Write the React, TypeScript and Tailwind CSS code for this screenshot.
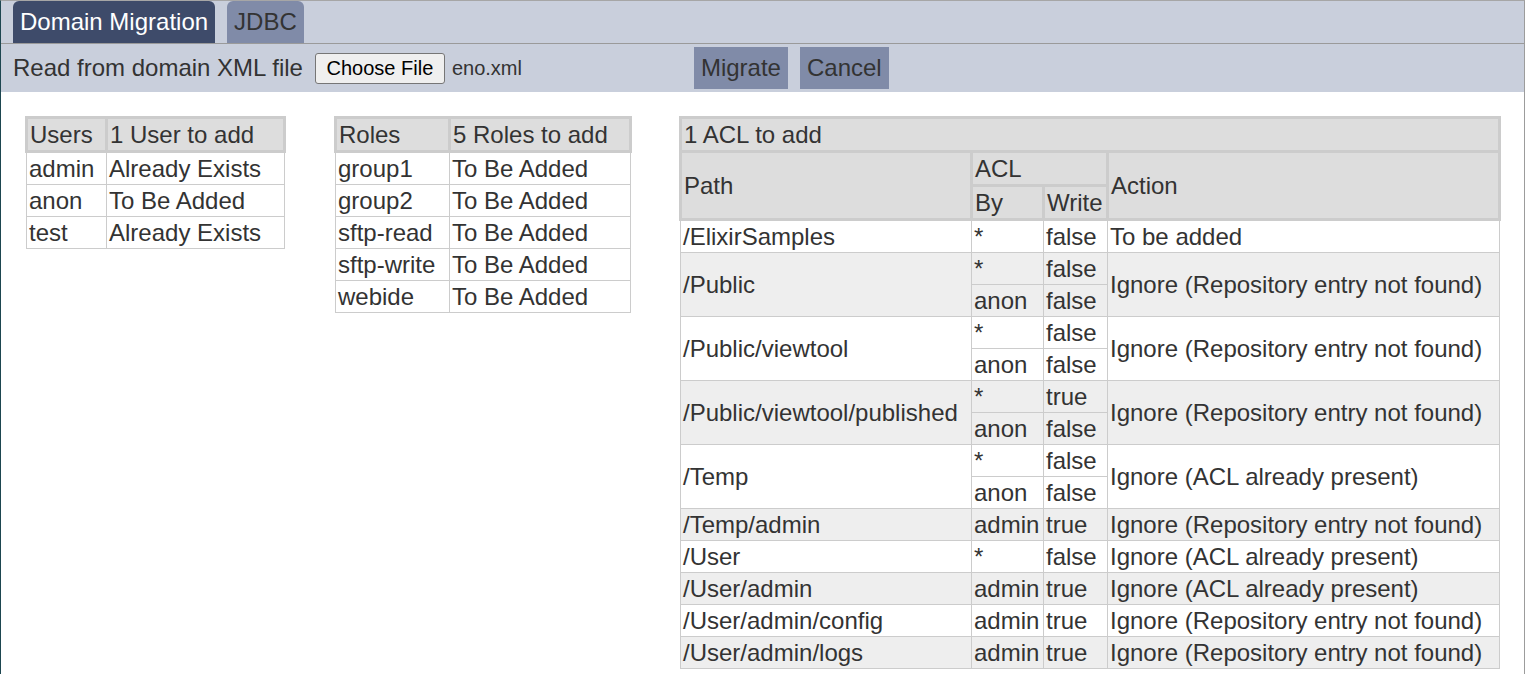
const th = 'border-[3px] border-[#cccccc] bg-[#dddddd] px-[2px] py-[1px] text-left font-normal leading-[29px] align-middle';
const td = 'border border-[#cccccc] px-[2px] py-[2px] leading-[27px] align-middle whitespace-nowrap';

const users = [
  ['admin', 'Already Exists'],
  ['anon', 'To Be Added'],
  ['test', 'Already Exists'],
];

const roles = [
  ['group1', 'To Be Added'],
  ['group2', 'To Be Added'],
  ['sftp-read', 'To Be Added'],
  ['sftp-write', 'To Be Added'],
  ['webide', 'To Be Added'],
];

interface AclEntry {
  path: string;
  perms: [string, string][];
  action: string;
}

const NF = 'Ignore (Repository entry not found)';
const AP = 'Ignore (ACL already present)';

const acls: AclEntry[] = [
  { path: '/ElixirSamples', perms: [['*', 'false']], action: 'To be added' },
  { path: '/Public', perms: [['*', 'false'], ['anon', 'false']], action: NF },
  { path: '/Public/viewtool', perms: [['*', 'false'], ['anon', 'false']], action: NF },
  { path: '/Public/viewtool/published', perms: [['*', 'true'], ['anon', 'false']], action: NF },
  { path: '/Temp', perms: [['*', 'false'], ['anon', 'false']], action: AP },
  { path: '/Temp/admin', perms: [['admin', 'true']], action: NF },
  { path: '/User', perms: [['*', 'false']], action: AP },
  { path: '/User/admin', perms: [['admin', 'true']], action: AP },
  { path: '/User/admin/config', perms: [['admin', 'true']], action: NF },
  { path: '/User/admin/logs', perms: [['admin', 'true']], action: NF },
];

function SimpleTable({ title, summary, rows, width, first }: { title: string; summary: string; rows: string[][]; width: string; first: string }) {
  return (
    <table className={`border-collapse table-fixed ${width}`}>
      <colgroup>
        <col className={first} />
        <col />
      </colgroup>
      <thead>
        <tr>
          <th className={th}>{title}</th>
          <th className={th}>{summary}</th>
        </tr>
      </thead>
      <tbody>
        {rows.map(([name, state]) => (
          <tr key={name} className="bg-white">
            <td className={td}>{name}</td>
            <td className={td}>{state}</td>
          </tr>
        ))}
      </tbody>
    </table>
  );
}

function AclTable() {
  return (
    <table className="border-collapse table-fixed w-[822px] ml-[47px]">
      <colgroup>
        <col className="w-[291px]" />
        <col className="w-[72px]" />
        <col className="w-[64px]" />
        <col />
      </colgroup>
      <thead>
        <tr>
          <th className={th} colSpan={4}>1 ACL to add</th>
        </tr>
        <tr>
          <th className={th} rowSpan={2}>Path</th>
          <th className={th} colSpan={2}>ACL</th>
          <th className={th} rowSpan={2}>Action</th>
        </tr>
        <tr>
          <th className={th}>By</th>
          <th className={th}>Write</th>
        </tr>
      </thead>
      {acls.map((a, i) => (
        <tbody key={a.path} className={i % 2 === 0 ? 'bg-white' : 'bg-[#eeeeee]'}>
          {a.perms.map(([by, write], j) => (
            <tr key={j}>
              {j === 0 && (
                <td className={td} rowSpan={a.perms.length}>{a.path}</td>
              )}
              <td className={td}>{by}</td>
              <td className={td}>{write}</td>
              {j === 0 && (
                <td className={td} rowSpan={a.perms.length}>{a.action}</td>
              )}
            </tr>
          ))}
        </tbody>
      ))}
    </table>
  );
}

export default function App() {
  return (
    <div className="min-h-[674px] bg-white font-['Liberation_Sans',Arial,sans-serif] text-[24px] text-[#333333]">
      <div className="w-[1525px] min-h-[674px] border-t border-t-[#a6a6a6] border-l border-l-[#1d4650] border-r border-r-[#9c9c9c]">
        <div className="h-[43px] bg-[#c9cfdc] border-b border-b-[#9a9a9a] flex items-end pl-[12px] gap-[12px]">
          <div className="h-[42px] rounded-t-[6px] bg-[#3e4b6a] text-white px-[7px] flex items-center">Domain Migration</div>
          <div className="h-[42px] rounded-t-[6px] bg-[#808ba8] px-[7px] flex items-center">JDBC</div>
        </div>
        <div className="h-[48px] bg-[#c9cfdc] flex items-center pl-[12px]">
          <span>Read from domain XML file</span>
          <button className="ml-[12px] h-[31px] w-[130px] rounded-[3px] border border-[#767676] bg-[#efefef] text-[20px] text-black leading-none">Choose File</button>
          <span className="ml-[7px] text-[20px] text-[#333333]">eno.xml</span>
          <button className="ml-[172px] h-[42px] bg-[#808ba8] px-[7px] text-[#333333]">Migrate</button>
          <button className="ml-[12px] h-[42px] bg-[#808ba8] px-[7px] text-[#333333]">Cancel</button>
        </div>
        <div className="flex items-start pl-[24px] pt-[24px]">
          <SimpleTable title="Users" summary="1 User to add" rows={users} width="w-[261px]" first="w-[80px]" />
          <div className="ml-[48px]">
            <SimpleTable title="Roles" summary="5 Roles to add" rows={roles} width="w-[298px]" first="w-[114px]" />
          </div>
          <AclTable />
        </div>
      </div>
    </div>
  );
}
